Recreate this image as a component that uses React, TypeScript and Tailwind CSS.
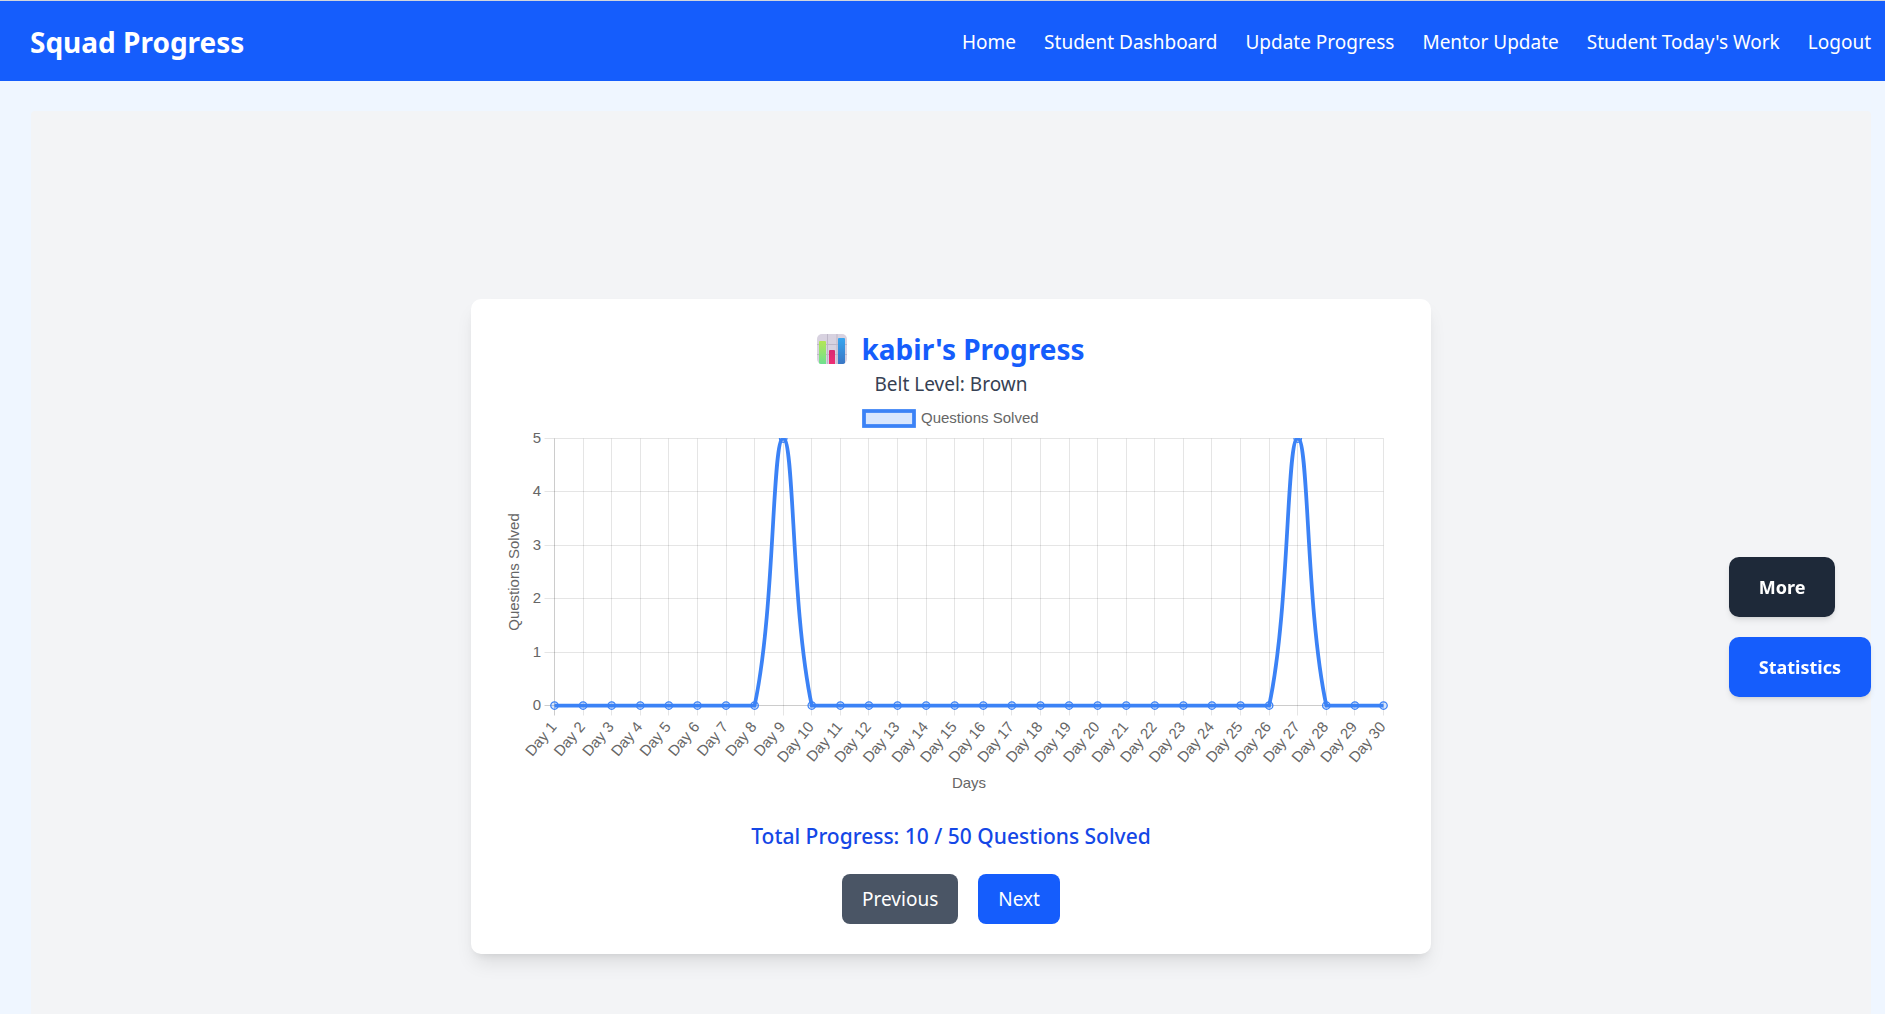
import React from "react";

const NAV_LINKS = [
  "Home",
  "Student Dashboard",
  "Update Progress",
  "Mentor Update",
  "Student Today's Work",
  "Logout",
];

const SOLVED = Array.from({ length: 30 }, (_, i) => (i === 8 || i === 26 ? 5 : 0));

const PLOT = { left: 53.5, right: 882.5, top: 39.5, bottom: 306.5 };
const TENSION = 0.4;
const MAX = 5;

type Point = { x: number; y: number };

const points: Point[] = SOLVED.map((value, i) => ({
  x: PLOT.left + (i * (PLOT.right - PLOT.left)) / (SOLVED.length - 1),
  y: PLOT.bottom - (value / MAX) * (PLOT.bottom - PLOT.top),
}));

const clampY = (y: number) => Math.min(PLOT.bottom, Math.max(PLOT.top, y));
const snap = (n: number) => Math.floor(n) + 0.5;

/* Cardinal spline whose control points stay inside the plot area. */
function buildCurve(list: Point[]): string {
  const controls = list.map((p, i) => {
    const prev = list[i - 1] ?? p;
    const next = list[i + 1] ?? p;
    const before = Math.hypot(p.x - prev.x, p.y - prev.y);
    const after = Math.hypot(next.x - p.x, next.y - p.y);
    const a = (TENSION * before) / (before + after);
    const b = (TENSION * after) / (before + after);
    return {
      inX: p.x - a * (next.x - prev.x),
      inY: clampY(p.y - a * (next.y - prev.y)),
      outX: p.x + b * (next.x - prev.x),
      outY: clampY(p.y + b * (next.y - prev.y)),
    };
  });
  return list
    .map((p, i) =>
      i === 0
        ? `M${p.x} ${p.y}`
        : `C${controls[i - 1].outX} ${controls[i - 1].outY} ${controls[i].inX} ${controls[i].inY} ${p.x} ${p.y}`,
    )
    .join(" ");
}

function BarChartIcon() {
  return (
    <svg viewBox="0 0 30 30" className="size-[30px]" aria-hidden="true">
      <defs>
        <linearGradient id="bar-green" x1="0" y1="0" x2="0" y2="1">
          <stop offset="0" stopColor="#b4e655" />
          <stop offset="1" stopColor="#6fe08f" />
        </linearGradient>
        <linearGradient id="bar-pink" x1="0" y1="0" x2="0" y2="1">
          <stop offset="0" stopColor="#d92b72" />
          <stop offset="1" stopColor="#ee2f74" />
        </linearGradient>
        <linearGradient id="bar-blue" x1="0" y1="0" x2="0" y2="1">
          <stop offset="0" stopColor="#37a5ef" />
          <stop offset="1" stopColor="#3a76c4" />
        </linearGradient>
      </defs>
      <rect width="30" height="30" rx="5" fill="#d8d2e0" />
      <path d="M10.5 0v30M20 0v30M0 10.5h30M0 20.5h30" stroke="#beb7c8" strokeWidth="1" />
      <path d="M2 29V8q0-1 1-1h5q1 0 1 1v22H4q-2 0-2-1z" fill="url(#bar-green)" />
      <path d="M12 30V17q0-1 1-1h4q1 0 1 1v13z" fill="url(#bar-pink)" />
      <path d="M21 30V5q0-1 1-1h5q1 0 1 1v24q-1 1-2 1z" fill="url(#bar-blue)" />
    </svg>
  );
}

function ProgressChart() {
  const rows = [0, 1, 2, 3, 4, 5];
  return (
    <svg
      viewBox="0 0 900 400"
      className="block w-full font-['Liberation_Sans',Arial,sans-serif] text-[15px]"
      role="img"
      aria-label="Questions solved per day"
    >
      <defs>
        <clipPath id="plot-clip">
          <rect x="0" y="39" width="900" height="361" />
        </clipPath>
      </defs>

      <rect x="363" y="12" width="50" height="15" fill="#3b82f6" fillOpacity="0.2" stroke="#3b82f6" strokeWidth="3.75" />
      <text x="420" y="24" fill="#666">Questions Solved</text>

      {points.map((p, i) => (
        <line
          key={i}
          x1={snap(p.x)}
          x2={snap(p.x)}
          y1={PLOT.top}
          y2={PLOT.bottom + 10}
          stroke="#000"
          strokeOpacity={i === 0 ? 0.2 : 0.1}
        />
      ))}
      {rows.map((value) => {
        const y = snap(PLOT.bottom - (value / MAX) * (PLOT.bottom - PLOT.top));
        return (
          <g key={value}>
            <line
              x1={PLOT.left - 10}
              x2={PLOT.right}
              y1={y}
              y2={y}
              stroke="#000"
              strokeOpacity={value === 0 ? 0.2 : 0.1}
            />
            <text x="40" y={y + 4} textAnchor="end" fill="#666">
              {value}
            </text>
          </g>
        );
      })}

      <g clipPath="url(#plot-clip)">
        <path d={buildCurve(points)} fill="none" stroke="#3b82f6" strokeWidth="3.75" />
        {points.map((p, i) => (
          <circle
            key={i}
            cx={p.x}
            cy={p.y}
            r="3.75"
            fill="#3b82f6"
            fillOpacity="0.2"
            stroke="#3b82f6"
            strokeWidth="1.25"
          />
        ))}
      </g>

      {points.map((p, i) => (
        <text
          key={i}
          transform={`translate(${p.x - 1} 325) rotate(-50)`}
          y="5"
          textAnchor="end"
          fill="#666"
        >
          {`Day ${i + 1}`}
        </text>
      ))}

      <text x="468" y="389" textAnchor="middle" fill="#666">
        Days
      </text>
      <text transform="translate(18 173) rotate(-90)" textAnchor="middle" fill="#666">
        Questions Solved
      </text>
    </svg>
  );
}

export default function App() {
  return (
    <div className="h-screen overflow-hidden border-t border-gray-300 bg-blue-50 font-['Noto_Sans','Open_Sans',sans-serif] text-[19px] leading-[30px]">
      <header className="flex h-20 items-center justify-between bg-[#155dfc] pt-0.5 pr-[14px] pl-[30px] text-white">
        <h1 className="text-[28px] leading-10 font-bold">Squad Progress</h1>
        <nav className="flex gap-7">
          {NAV_LINKS.map((label) => (
            <a key={label} href="#" className="whitespace-nowrap">
              {label}
            </a>
          ))}
        </nav>
      </header>

      <main className="pt-[30px] pr-[14px] pl-[31px]">
        <div className="flex min-h-screen items-center justify-center rounded-sm bg-gray-100 pt-[17px]">
          <section className="w-full max-w-[960px] rounded-[10px] bg-white p-[30px] text-center shadow-[0_12px_19px_-4px_rgba(0,0,0,0.1),0_5px_8px_-5px_rgba(0,0,0,0.1)]">
            <h2 className="flex items-center justify-center gap-[14px] text-[28px] leading-10 font-bold text-[#155dfc]">
              <BarChartIcon />
              kabir's Progress
            </h2>
            <p className="text-[#364153]">Belt Level: Brown</p>
            <ProgressChart />
            <p className="mt-5 text-[21px] leading-[35px] font-medium text-[#1447e6]">
              Total Progress: 10 / 50 Questions Solved
            </p>
            <div className="mt-5 flex justify-center gap-5">
              <button type="button" className="rounded-lg bg-[#4a5565] px-5 py-[10px] text-white">
                Previous
              </button>
              <button type="button" className="rounded-lg bg-[#155dfc] px-5 py-[10px] text-white">
                Next
              </button>
            </div>
          </section>
        </div>
      </main>

      <aside className="fixed top-[557px] right-[14px] flex flex-col items-start gap-5 text-[18px] font-bold text-white">
        <button type="button" className="rounded-[10px] bg-[#1e2939] px-[30px] py-[15px] shadow-md">
          More
        </button>
        <button type="button" className="rounded-[10px] bg-[#155dfc] px-[30px] py-[15px] shadow-md">
          Statistics
        </button>
      </aside>
    </div>
  );
}
